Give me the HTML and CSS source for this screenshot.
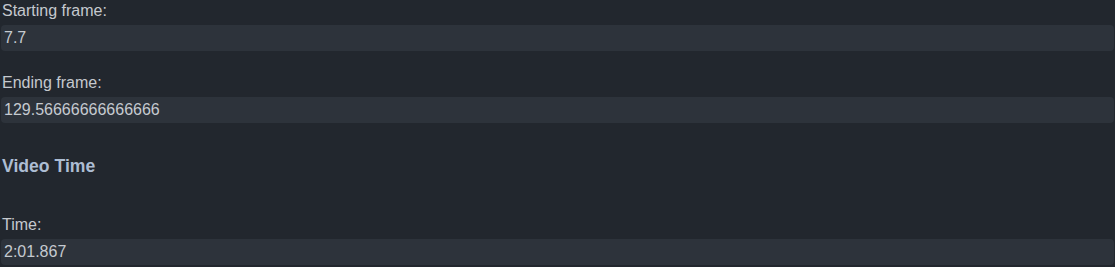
FILE: index.html
```html
<!DOCTYPE html>
<html lang="en">
<head>
<meta charset="utf-8">
<title>Video frames</title>
<link rel="stylesheet" href="styles.css">
</head>
<body>
<div class="panel">
  <div class="field">
    <label class="field-label" for="start">Starting frame:</label>
    <input class="field-input" id="start" type="text" value="7.7" readonly>
  </div>
  <div class="field">
    <label class="field-label" for="end">Ending frame:</label>
    <input class="field-input" id="end" type="text" value="129.56666666666666" readonly>
  </div>
  <h3 class="section-title">Video Time</h3>
  <div class="field">
    <label class="field-label" for="time">Time:</label>
    <input class="field-input" id="time" type="text" value="2:01.867" readonly>
  </div>
</div>
</body>
</html>
```
FILE: styles.css
```css
html, body {
  margin: 0;
  padding: 0;
  background: #22272e;
}
body {
  font-family: "Liberation Sans", Arial, sans-serif;
  font-size: 16px;
  color: #c5c9ce;
}
.panel {
  padding: 2px 1px 0 1px;
}
.field {
  display: flex;
  flex-direction: column;
}
.field + .field {
  margin-top: 23px;
}
.field-label {
  display: block;
  line-height: 18px;
  padding-left: 1px;
  margin-bottom: 5px;
  color: #c5c9ce;
}
.field-input {
  display: block;
  width: 100%;
  box-sizing: border-box;
  height: 26px;
  line-height: 26px;
  padding: 0 3px;
  margin: 0;
  border: none;
  outline: none;
  border-radius: 4px;
  background: #2d333b;
  color: #c5cad0;
  font-family: "Liberation Sans", Arial, sans-serif;
  font-size: 16px;
}
.section-title {
  margin: 33px 0 40px 1px;
  font-size: 17.6px;
  line-height: 20px;
  font-weight: bold;
  color: #adbdd3;
}
```
